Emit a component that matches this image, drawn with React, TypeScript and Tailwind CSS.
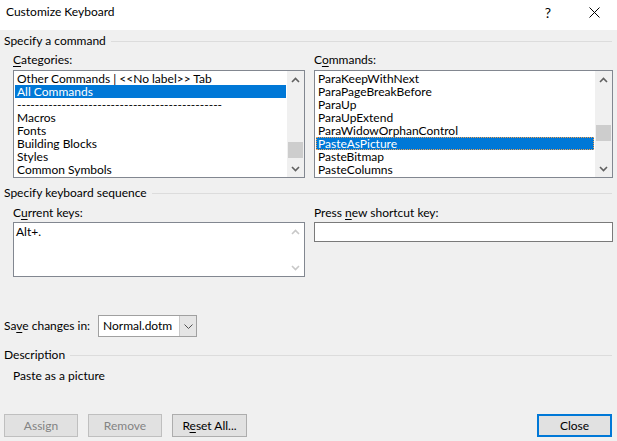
import React from "react";

const FONT = { fontFamily: 'Lato, "Noto Sans", Arial, sans-serif' };

function Up({ color = "#606060" }: { color?: string }) {
  return (
    <svg width="9" height="6" viewBox="0 0 9 6">
      <path d="M1 5 L4.5 1.5 L8 5" fill="none" stroke={color} strokeWidth="1.6" />
    </svg>
  );
}
function Down({ color = "#606060" }: { color?: string }) {
  return (
    <svg width="9" height="6" viewBox="0 0 9 6">
      <path d="M1 1 L4.5 4.5 L8 1" fill="none" stroke={color} strokeWidth="1.6" />
    </svg>
  );
}

function Scrollbar({ thumbTop, thumbH, disabled }: { thumbTop?: number; thumbH?: number; disabled?: boolean }) {
  const c = disabled ? "#c8c8c8" : "#606060";
  return (
    <div className={`w-[17px] h-full flex flex-col ${disabled ? "bg-white" : "bg-[#f0f0f0]"}`}>
      <div className="h-[17px] flex items-center justify-center shrink-0">
        <Up color={c} />
      </div>
      <div className="flex-1 relative">
        {thumbTop !== undefined && (
          <div className="absolute left-[1px] right-[1px] bg-[#cdcdcd]" style={{ top: thumbTop, height: thumbH }} />
        )}
      </div>
      <div className="h-[17px] flex items-center justify-center shrink-0">
        <Down color={c} />
      </div>
    </div>
  );
}

function Header({ text }: { text: string }) {
  return (
    <div className="h-[16px] flex items-center pl-[4px] pr-[5px]">
      <span className="whitespace-nowrap leading-[16px]">{text}</span>
      <div className="flex-1 h-px bg-[#dcdcdc] ml-[5px]" />
    </div>
  );
}

function ListBox({
  items,
  selected,
  focus,
  width,
  thumbTop,
}: {
  items: string[];
  selected: number;
  focus?: boolean;
  width: string;
  thumbTop: number;
}) {
  return (
    <div className={`${width} h-[108px] border border-[#828790] bg-white flex`}>
      <div className="flex-1 pt-[1px] px-[1px] overflow-hidden">
        {items.map((it, i) => (
          <div
            key={i}
            className={`h-[13px] leading-[13px] pl-[2px] whitespace-nowrap ${
              i === selected ? "bg-[#0078d7] text-white" : "text-black"
            } ${i === selected && focus ? "outline outline-1 outline-dotted outline-[#f0a050] -outline-offset-1" : ""}`}
          >
            {it}
          </div>
        ))}
      </div>
      <Scrollbar thumbTop={thumbTop} thumbH={16} />
    </div>
  );
}

function Btn({ children, disabled, def, w = "w-[75px]" }: { children: React.ReactNode; disabled?: boolean; def?: boolean; w?: string }) {
  return (
    <div
      className={`${w} h-[23px] flex items-center justify-center bg-[#e1e1e1] ${
        def ? "border-2 border-[#0078d7]" : disabled ? "border border-[#bfbfbf] text-[#838383]" : "border border-[#adadad]"
      }`}
    >
      {children}
    </div>
  );
}

export default function App() {
  return (
    <div className="w-[617px] h-[441px] bg-[#f0f0f0] text-[12px] text-black overflow-hidden flex flex-col" style={FONT}>
      {/* Title bar */}
      <div className="h-[30px] bg-white flex items-center shrink-0">
        <span className="pl-[6px] flex-1 -mt-[6px]">Customize Keyboard</span>
        <div className="w-[46px] h-full flex items-center justify-center -mt-[6px] text-[14px]">?</div>
        <div className="w-[46px] h-full flex items-center justify-center -mt-[6px]">
          <svg width="11" height="11" viewBox="0 0 11 11">
            <path d="M0.5 0.5 L10.5 10.5 M10.5 0.5 L0.5 10.5" stroke="#000" strokeWidth="1" />
          </svg>
        </div>
      </div>

      <div className="mt-[3px]">
        <Header text="Specify a command" />
      </div>

      <div className="mt-[3px] h-[16px] flex">
        <div className="pl-[13px] w-[314px] leading-[16px]">
          <span className="underline underline-offset-2">C</span>ategories:
        </div>
        <div className="leading-[16px]">
          C<span className="underline underline-offset-2">o</span>mmands:
        </div>
      </div>

      <div className="mt-[2px] flex pl-[13px]">
        <ListBox
          width="w-[292px]"
          items={[
            "Other Commands | <<No label>> Tab",
            "All Commands",
            "----------------------------------------------",
            "Macros",
            "Fonts",
            "Building Blocks",
            "Styles",
            "Common Symbols",
          ]}
          selected={1}
          thumbTop={54}
        />
        <div className="w-[9px]" />
        <ListBox
          width="w-[299px]"
          items={[
            "ParaKeepWithNext",
            "ParaPageBreakBefore",
            "ParaUp",
            "ParaUpExtend",
            "ParaWidowOrphanControl",
            "PasteAsPicture",
            "PasteBitmap",
            "PasteColumns",
          ]}
          selected={5}
          focus
          thumbTop={37}
        />
      </div>

      <div className="mt-[7px]">
        <Header text="Specify keyboard sequence" />
      </div>

      <div className="mt-[4px] h-[16px] flex">
        <div className="pl-[13px] w-[314px] leading-[16px]">
          C<span className="underline underline-offset-2">u</span>rrent keys:
        </div>
        <div className="leading-[16px]">
          Press <span className="underline underline-offset-2">n</span>ew shortcut key:
        </div>
      </div>

      <div className="mt-[1px] flex pl-[13px] items-start">
        <div className="w-[292px] h-[55px] border border-[#828790] bg-white flex">
          <div className="flex-1 pl-[2px] pt-[1px] leading-[15px]">Alt+.</div>
          <Scrollbar disabled />
        </div>
        <div className="w-[9px]" />
        <div className="w-[299px] h-[20px] border border-[#7a7a7a] bg-white" />
      </div>

      <div className="mt-[38px] h-[22px] flex items-center pl-[4px]">
        <span className="w-[94px]">
          Sa<span className="underline underline-offset-2">v</span>e changes in:
        </span>
        <div className="w-[99px] h-[22px] border border-[#a0a0a0] bg-white flex">
          <div className="flex-1 pl-[4px] leading-[20px]">Normal.dotm</div>
          <div className="w-[17px] h-full bg-[#e5e5e5] border-l border-[#c8c8c8] flex items-center justify-center">
            <svg width="9" height="5" viewBox="0 0 9 5">
              <path d="M0.5 0.5 L4.5 4.5 L8.5 0.5" fill="none" stroke="#505050" strokeWidth="1" />
            </svg>
          </div>
        </div>
      </div>

      <div className="mt-[10px]">
        <Header text="Description" />
      </div>

      <div className="mt-[5px] h-[16px] pl-[13px] leading-[16px]">Paste as a picture</div>

      <div className="mt-[30px] flex pl-[4px] pr-[5px]">
        <Btn disabled w="w-[74px]">Assign</Btn>
        <div className="w-[10px]" />
        <Btn disabled w="w-[74px]">Remove</Btn>
        <div className="w-[10px]" />
        <Btn w="w-[75px]">
          <span>
            R<span className="underline underline-offset-2">e</span>set All...
          </span>
        </Btn>
        <div className="flex-1" />
        <Btn def w="w-[75px]">Close</Btn>
      </div>
    </div>
  );
}
